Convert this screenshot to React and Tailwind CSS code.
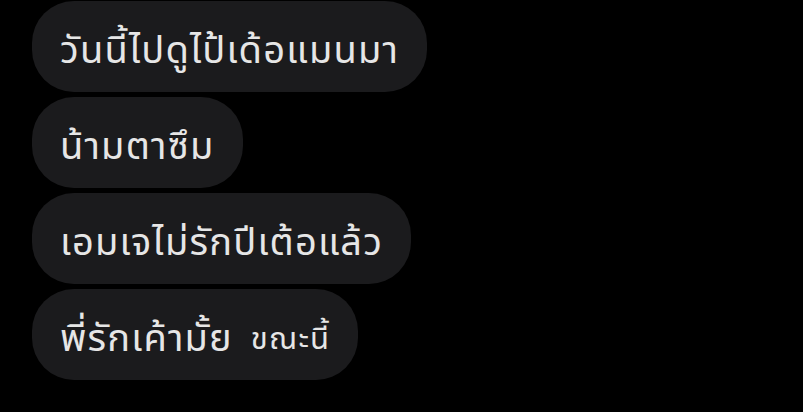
export default function App() {
  const messages = [
    { text: 'วันนี้ไปดูไป้เด้อแมนมา' },
    { text: 'น้ามตาซึม' },
    { text: 'เอมเจไม่รักปีเต้อแล้ว' },
    { text: 'พี่รักเค้ามั้ย', extra: 'ขณะนี้' },
  ];

  return (
    <div className="w-[803px] h-[412px] bg-black overflow-hidden">
      <div className="flex flex-col items-start gap-[5px] pl-8 pt-px">
        {messages.map((m, i) => (
          <div
            key={i}
            className="h-[91px] flex items-center rounded-[42px] bg-[#1b1b1d] px-[28px] text-[#e6e6e6] text-[38px] tracking-[1.2px] font-['Noto_Sans','Noto_Sans_Thai',sans-serif]"
          >
            <span className="translate-y-[2px]">{m.text}</span>
            {m.extra && <span className="ml-[18px] text-[31px] translate-y-[3px]">{m.extra}</span>}
          </div>
        ))}
      </div>
    </div>
  );
}
